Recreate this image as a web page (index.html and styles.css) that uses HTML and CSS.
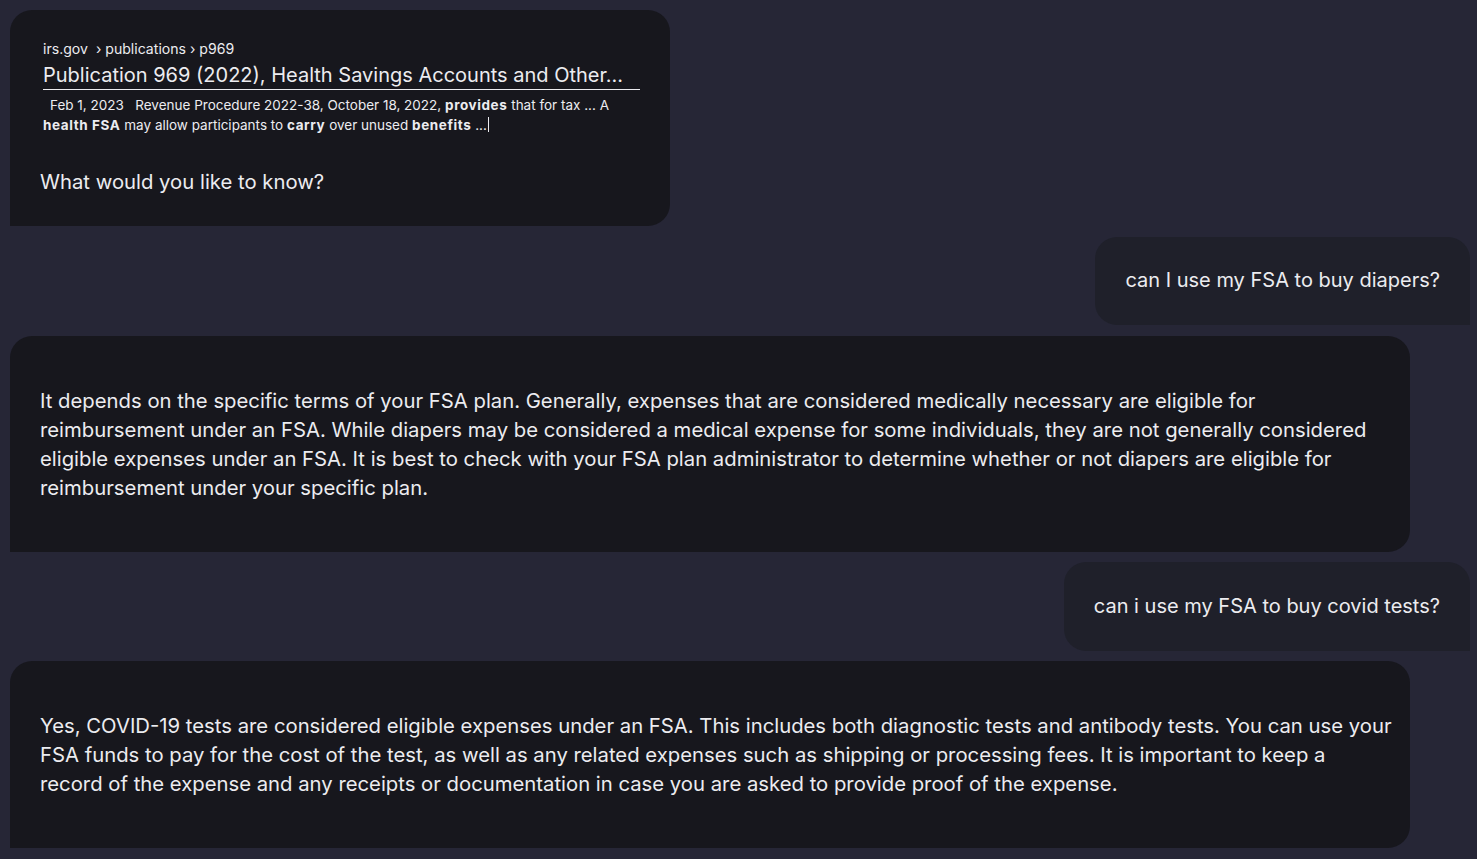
FILE: index.html
```html
<!DOCTYPE html>
<html lang="en">
<head>
<meta charset="utf-8">
<title>Chat</title>
<link rel="stylesheet" href="styles.css">
</head>
<body>
<main class="chat">
  <div class="msg bot intro">
    <div class="result">
      <div class="crumbs">irs.gov&nbsp; › publications › p969</div>
      <div class="title">Publication 969 (2022), Health Savings Accounts and Other...</div>
      <div class="snippet"><span class="date">Feb 1, 2023</span> &nbsp; Revenue Procedure 2022-38, October 18, 2022, <b>provides</b> that for tax ... A<br><b>health FSA</b> may allow participants to <b>carry</b> over unused <b>benefits</b> ...<span class="caret"></span></div>
    </div>
    <p class="ask">What would you like to know?</p>
  </div>

  <div class="msg user">can I use my FSA to buy diapers?</div>

  <div class="msg bot wide">
    <p class="answer">It depends on the specific terms of your FSA plan. Generally, expenses that are considered medically necessary are eligible for<br>reimbursement under an FSA. While diapers may be considered a medical expense for some individuals, they are not generally considered<br>eligible expenses under an FSA. It is best to check with your FSA plan administrator to determine whether or not diapers are eligible for<br>reimbursement under your specific plan.</p>
  </div>

  <div class="msg user">can i use my FSA to buy covid tests?</div>

  <div class="msg bot wide">
    <p class="answer">Yes, COVID-19 tests are considered eligible expenses under an FSA. This includes both diagnostic tests and antibody tests. You can use your<br>FSA funds to pay for the cost of the test, as well as any related expenses such as shipping or processing fees. It is important to keep a<br>record of the expense and any receipts or documentation in case you are asked to provide proof of the expense.</p>
  </div>
</main>
</body>
</html>
```
FILE: styles.css
```css
* { box-sizing: border-box; }
html, body { margin: 0; }
body {
  background: #262636;
  color: #ececf0;
  font-family: Inter, "Noto Sans", sans-serif;
  font-size: 20.3px;
}
.chat {
  display: flex;
  flex-direction: column;
  gap: 10.5px;
  padding: 10px 7px 12px 10px;
}
.msg {
  border-radius: 22px;
}
.bot {
  align-self: flex-start;
  background: #17171d;
  border-bottom-left-radius: 0;
}
.user {
  align-self: flex-end;
  background: #1f202a;
  border-bottom-right-radius: 0;
  padding: 29.75px 30px;
  font-size: 20px;
  line-height: 29px;
  white-space: nowrap;
}
.intro {
  padding: 30px 30px 30px;
}
.result {
  width: 597px;
  margin-left: 3px;
}
.crumbs {
  font-size: 14.1px;
  line-height: 18px;
}
.title {
  margin-top: 4px;
  font-size: 20px;
  line-height: 26px;
  padding-bottom: 1px;
  border-bottom: 1px solid #ececf0;
  white-space: nowrap;
}
.snippet {
  margin-top: 5px;
  font-size: 13.5px;
  line-height: 20px;
  white-space: nowrap;
}
.date {
  margin-left: 7px;
}
.snippet b {
  font-weight: 700;
  letter-spacing: 0.6px;
}
.caret {
  display: inline-block;
  width: 1px;
  height: 15px;
  background: #ececf0;
  vertical-align: -2px;
  margin-left: 1px;
}
.ask {
  margin: 32px 0 0;
  line-height: 29px;
}
.wide {
  width: 1400px;
  padding: 50px 30px;
}
.answer {
  margin: 0;
  line-height: 29px;
  white-space: nowrap;
}
```
